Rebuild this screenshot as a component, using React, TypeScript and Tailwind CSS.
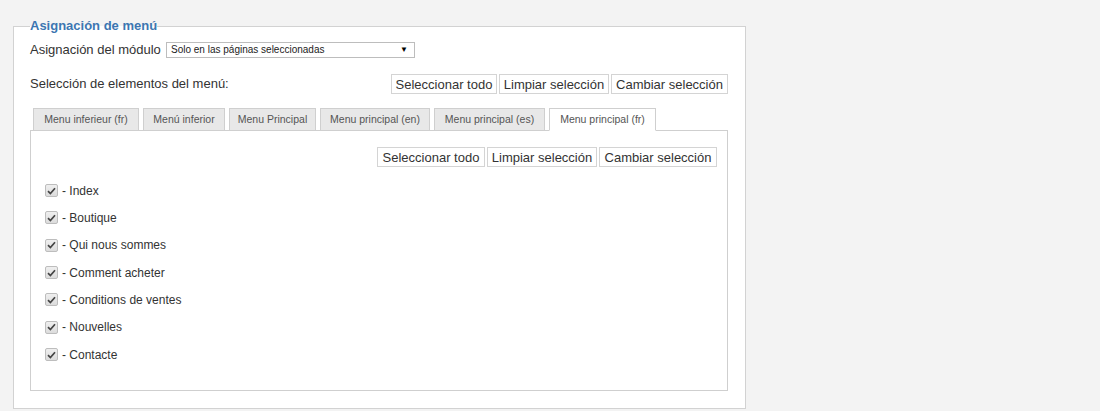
import React from "react";

const tabs = [
  { label: "Menu inferieur (fr)", w: 106 },
  { label: "Menú inferior", w: 82 },
  { label: "Menu Principal", w: 87 },
  { label: "Menu principal (en)", w: 110 },
  { label: "Menu principal (es)", w: 111 },
  { label: "Menu principal (fr)", w: 107 },
];

const items = [
  "Index",
  "Boutique",
  "Qui nous sommes",
  "Comment acheter",
  "Conditions de ventes",
  "Nouvelles",
  "Contacte",
];

function ButtonGroup({ widths }: { widths: number[] }) {
  const labels = ["Seleccionar todo", "Limpiar selección", "Cambiar selección"];
  return (
    <div className="flex gap-[2px]">
      {labels.map((label, i) => (
        <button
          key={label}
          style={{ width: widths[i] }}
          className="flex h-[20px] items-center justify-center border border-[#d4d4d4] bg-white text-[13px] leading-none text-[#333]"
        >
          {label}
        </button>
      ))}
    </div>
  );
}

function CheckedBox() {
  return (
    <span className="flex h-[13px] w-[13px] items-center justify-center rounded-[2px] border border-[#bdbdbd] bg-gradient-to-b from-[#efefef] to-[#dcdcdc]">
      <svg width="9" height="8" viewBox="0 0 9 8">
        <path d="M1 4.2 L3.4 6.6 L8 1.2" fill="none" stroke="#444" strokeWidth="1.7" />
      </svg>
    </span>
  );
}

export default function App() {
  return (
    <div
      className="min-h-[411px] bg-[#f3f3f3] pt-[18px] pb-[2px]"
      style={{ fontFamily: '"Liberation Sans", Arial, sans-serif' }}
    >
      <fieldset className="ml-[13px] w-[733px] border border-[#d2d2d2] bg-white pt-[8px] pr-[17px] pb-[17px] pl-[16px]">
        <legend className="p-0 text-[13px] font-bold leading-[16px] text-[#3c76b1]">
          Asignación de menú
        </legend>

        <div className="flex h-[16px] items-center">
          <span className="w-[136px] text-[13px] text-[#333]">Asignación del módulo</span>
          <div className="flex h-[16px] w-[249px] items-center justify-between border border-[#bdbdbd] bg-white pl-[4px] pr-[6px]">
            <span className="text-[10px] leading-none text-[#222]">
              Solo en las páginas seleccionadas
            </span>
            <span className="text-[8px] leading-none text-black">▼</span>
          </div>
        </div>

        <div className="mt-[16px] flex h-[20px] items-center justify-between">
          <span className="text-[13px] text-[#333]">Selección de elementos del menú:</span>
          <ButtonGroup widths={[106, 110, 117]} />
        </div>

        <div className="relative z-10 mt-[14px] -mb-px ml-[3px] flex gap-[4px]">
          {tabs.map((t, i) => {
            const active = i === tabs.length - 1;
            return (
              <div
                key={t.label}
                style={{ width: t.w }}
                className={
                  active
                    ? "flex h-[23px] items-center justify-center whitespace-nowrap border border-b-white border-[#cfcfcf] bg-white text-[10.5px] text-[#555]"
                    : "flex h-[23px] items-center justify-center whitespace-nowrap border border-[#cfcfcf] bg-[#e8e8e8] text-[10.5px] text-[#555]"
                }
              >
                {t.label}
              </div>
            );
          })}
        </div>

        <div className="border border-[#cfcfcf] bg-white pt-[16px] pr-[10px] pb-[22px] pl-[14px]">
          <div className="flex justify-end">
            <ButtonGroup widths={[108, 110, 118]} />
          </div>
          <div className="mt-[10px] flex flex-col">
            {items.map((it) => (
              <div key={it} className="flex h-[27.33px] items-center gap-[4px]">
                <CheckedBox />
                <span className="text-[12px] text-[#333]">- {it}</span>
              </div>
            ))}
          </div>
        </div>
      </fieldset>
    </div>
  );
}
